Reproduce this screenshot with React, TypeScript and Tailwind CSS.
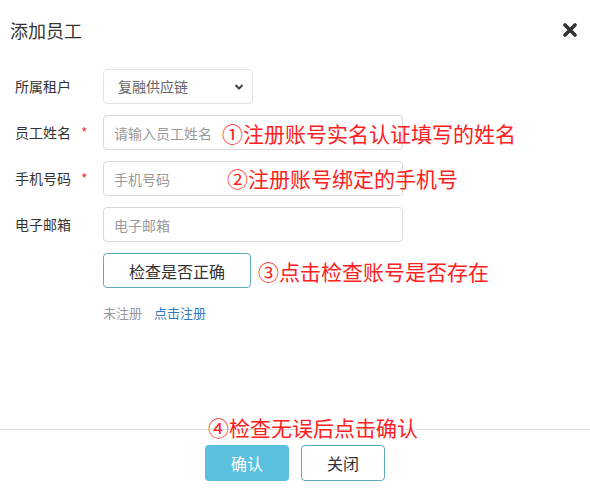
import React from "react";

const cjk = { fontFamily: '"Noto Sans CJK SC", "Noto Sans", sans-serif' };

const Field = ({
  label,
  required,
  children,
}: {
  label: string;
  required?: boolean;
  children: React.ReactNode;
}) => (
  <div className="flex items-center h-[35px]">
    <div className="w-[103px] shrink-0 pl-[15px] flex items-center text-[14px] text-[#333]">
      <span>{label}</span>
      {required && <span className="ml-[10px] text-[#e4393c]">*</span>}
    </div>
    {children}
  </div>
);

export default function App() {
  return (
    <div className="relative w-[590px] h-[490px] bg-white overflow-hidden" style={cjk}>
      {/* Header */}
      <div className="flex items-center justify-between h-[60px] pl-[10px] pr-[13px]">
        <h2 className="text-[18px] text-[#333] font-normal">添加员工</h2>
        <svg width="14" height="14" viewBox="0 0 14 14">
          <path d="M2 2 L12 12 M12 2 L2 12" stroke="#333" strokeWidth="3.6" strokeLinecap="round" />
        </svg>
      </div>

      {/* Form */}
      <div className="h-[369px] pt-[9px] flex flex-col gap-[11px]">
        <Field label="所属租户">
          <div className="w-[150px] h-[35px] border border-[#e3e3e3] rounded-[4px] flex items-center justify-between pl-[14px] pr-[8px] text-[14px] text-[#666]">
            <span>复融供应链</span>
            <svg width="10" height="8" viewBox="0 0 10 8">
              <path d="M1.5 2 L5 5.5 L8.5 2" stroke="#444" strokeWidth="2" fill="none" />
            </svg>
          </div>
        </Field>
        <Field label="员工姓名" required>
          <input
            className="w-[300px] h-[35px] border border-[#d9d9d9] rounded-[4px] px-[10px] text-[14px] placeholder:text-[#999] outline-none"
            placeholder="请输入员工姓名"
          />
        </Field>
        <Field label="手机号码" required>
          <input
            className="w-[300px] h-[35px] border border-[#d9d9d9] rounded-[4px] px-[10px] text-[14px] placeholder:text-[#999] outline-none"
            placeholder="手机号码"
          />
        </Field>
        <Field label="电子邮箱">
          <input
            className="w-[300px] h-[35px] border border-[#d9d9d9] rounded-[4px] px-[10px] text-[14px] placeholder:text-[#999] outline-none"
            placeholder="电子邮箱"
          />
        </Field>
        <div className="flex items-center h-[35px] pl-[103px]">
          <button className="w-[148px] h-[35px] border border-[#5fa9bd] rounded-[4px] text-[16px] text-[#333] bg-white">
            检查是否正确
          </button>
        </div>
        <div className="pl-[103px] pt-[4px] text-[13px] flex gap-[12px]">
          <span className="text-[#999]">未注册</span>
          <span className="text-[#337ab7]">点击注册</span>
        </div>
      </div>

      {/* Footer */}
      <div className="border-t border-[#e0e0e0] pt-[15px] flex justify-center gap-[12px]">
        <button className="w-[84px] h-[36px] rounded-[4px] bg-[#5bc0de] text-white text-[16px]">确认</button>
        <button className="w-[84px] h-[36px] rounded-[4px] border border-[#5fa9bd] bg-white text-[#333] text-[16px]">
          关闭
        </button>
      </div>

      {/* Annotations */}
      <div className="absolute left-[222px] top-[119px] text-[21px] leading-[28px] text-[#ff2020]">①注册账号实名认证填写的姓名</div>
      <div className="absolute left-[227px] top-[164px] text-[21px] leading-[28px] text-[#ff2020]">②注册账号绑定的手机号</div>
      <div className="absolute left-[258px] top-[257px] text-[21px] leading-[28px] text-[#ff2020]">③点击检查账号是否存在</div>
      <div className="absolute left-[208px] top-[413px] text-[21px] leading-[28px] text-[#ff2020]">④检查无误后点击确认</div>
    </div>
  );
}
